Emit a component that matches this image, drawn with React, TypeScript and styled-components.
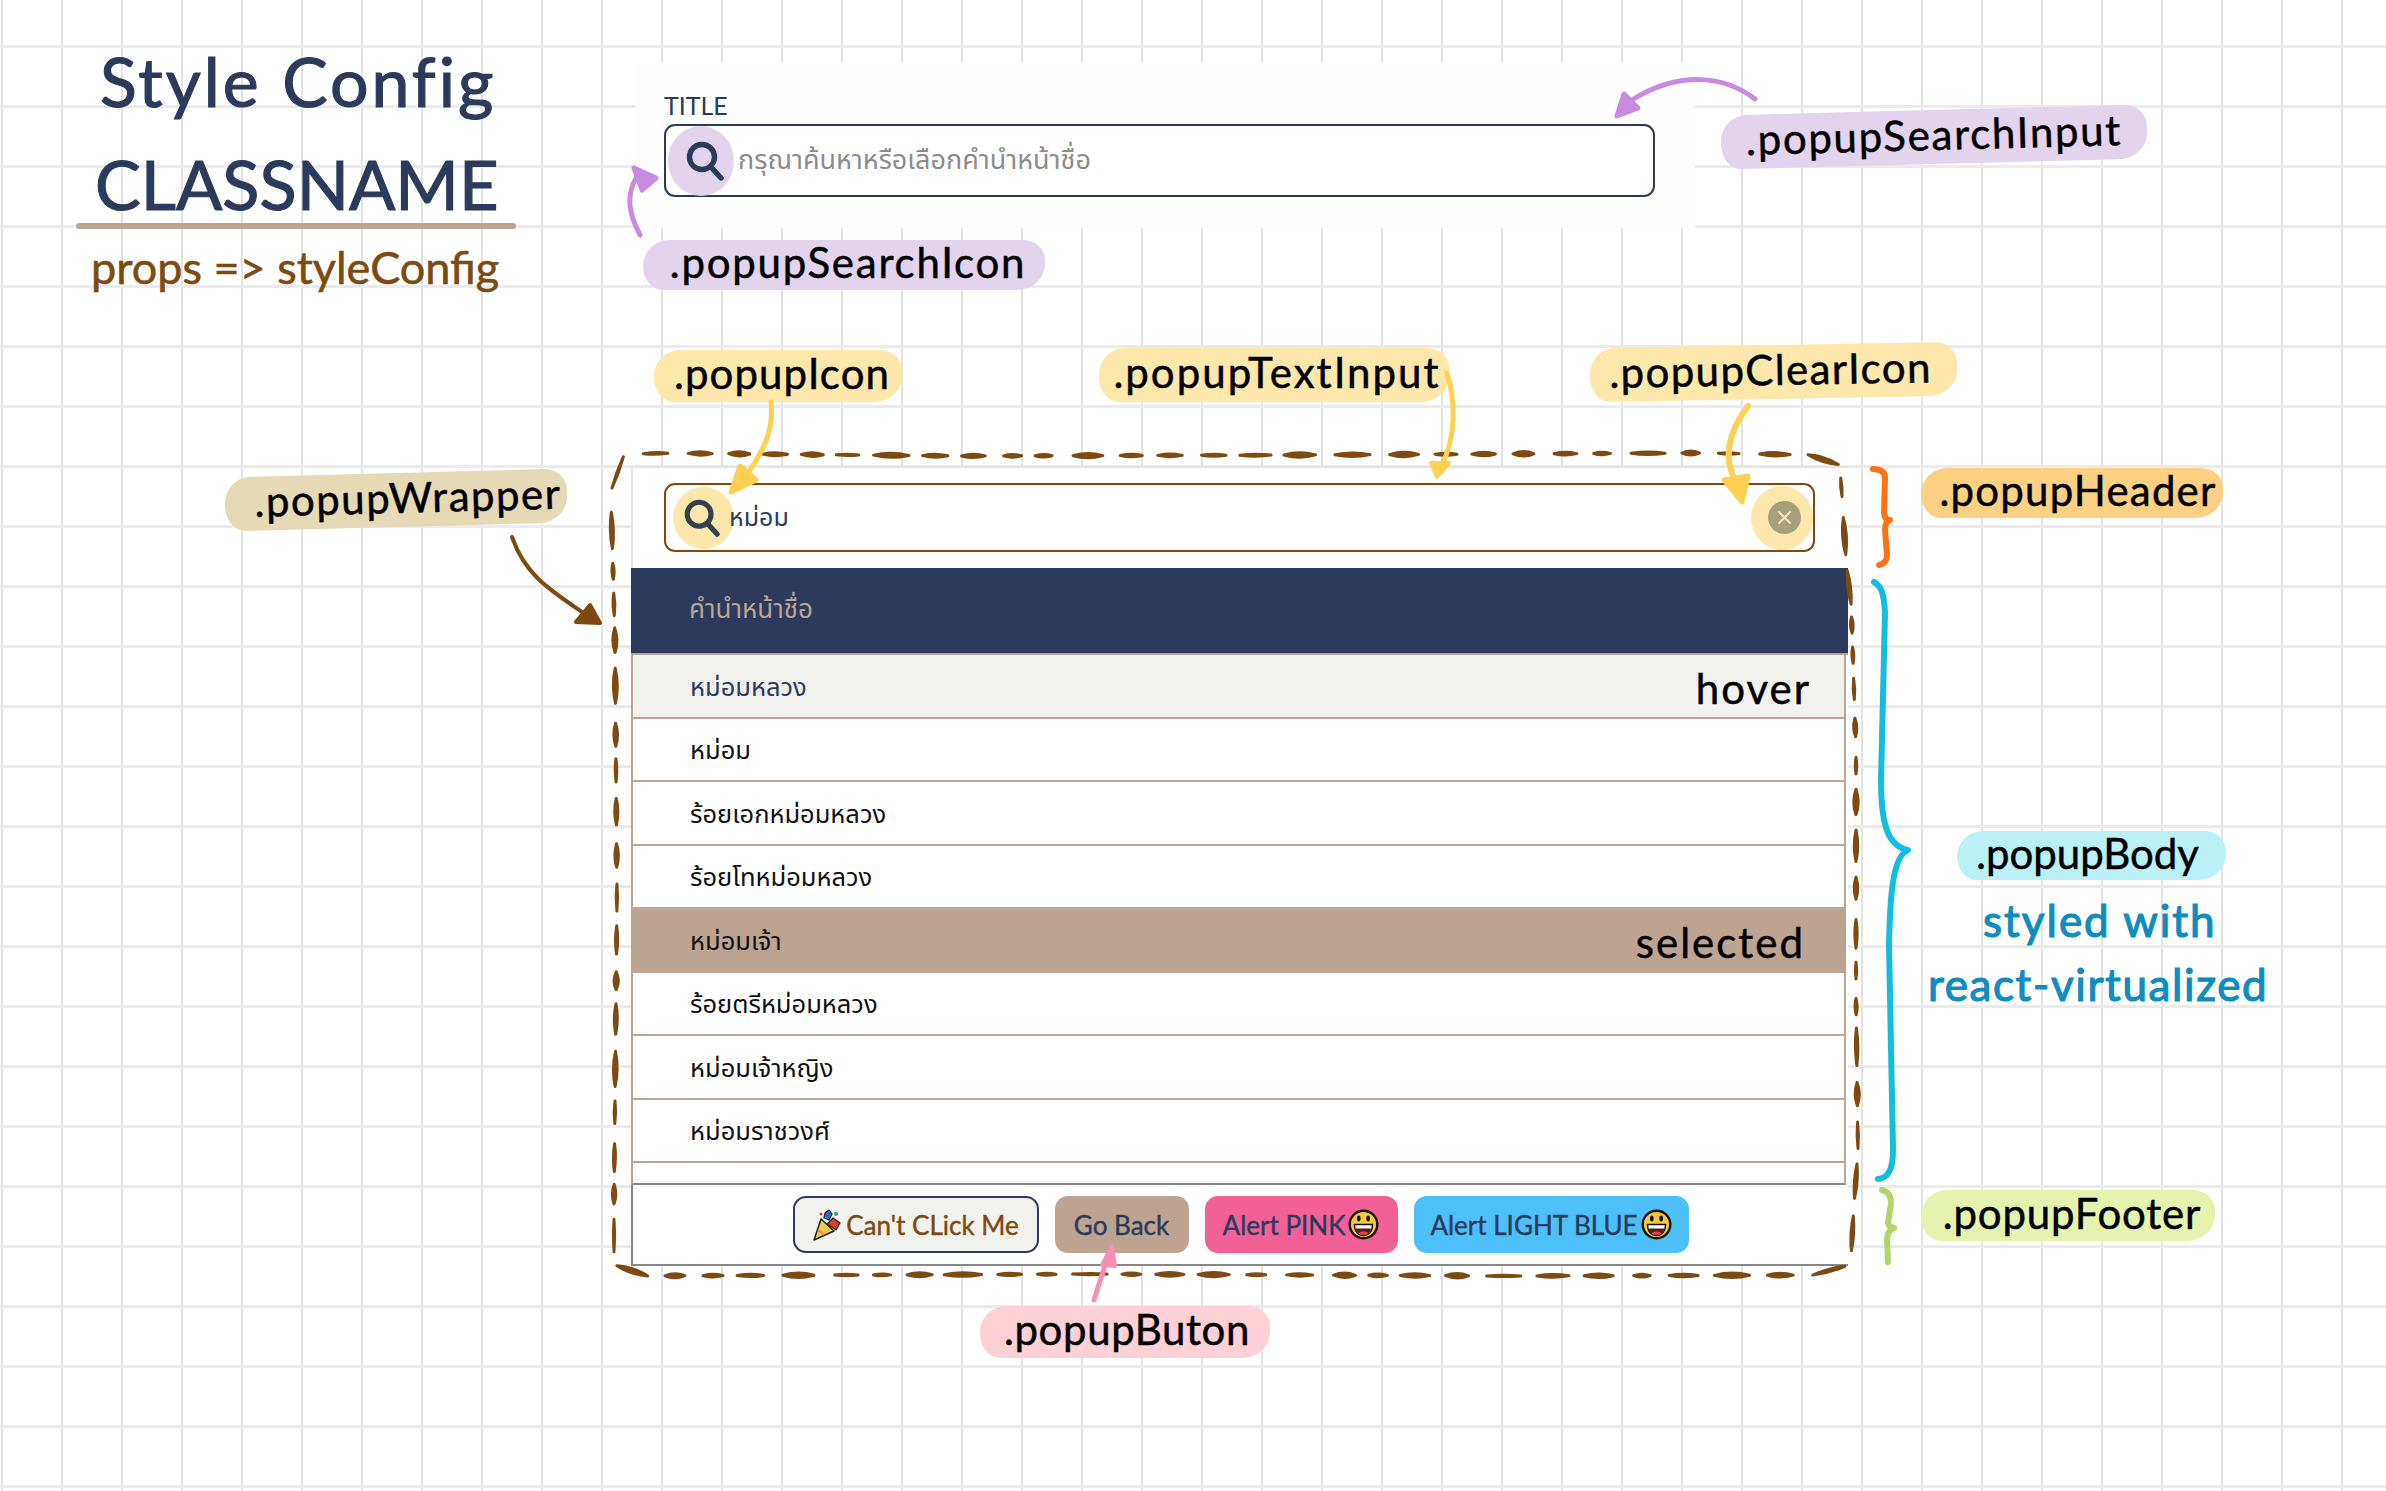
import React from "react";
import styled, { createGlobalStyle } from "styled-components";

const NAVY = "#2c3b5b";
const TAN = "#bca392";
const BROWN = "#7d4a12";
const HAND = `Lato, "Noto Sans", sans-serif`;
const THAI = `"Noto Sans Thai", "Noto Sans Thai Looped", "Noto Sans", Lato, sans-serif`;

const Global = createGlobalStyle`
  html, body { margin: 0; padding: 0; background: #fff; }
`;

const Canvas = styled.div`
  position: relative;
  width: 2386px;
  height: 1491px;
  overflow: hidden;
  background-color: #fff;
  background-image:
    linear-gradient(#ebebeb 3px, transparent 3px),
    linear-gradient(90deg, #e3e3e3 2px, transparent 2px);
  background-size: 60px 60px;
  background-position: 1px 45px;
`;

const Heading = styled.div<{ $x: number; $y: number; $size: number; $color: string; $ls?: number; $stroke?: number }>`
  position: absolute;
  left: ${(p) => p.$x}px;
  top: ${(p) => p.$y}px;
  font-family: ${HAND};
  font-size: ${(p) => p.$size}px;
  line-height: 1;
  color: ${(p) => p.$color};
  letter-spacing: ${(p) => p.$ls ?? 0}px;
  -webkit-text-stroke: ${(p) => p.$stroke ?? 1.2}px ${(p) => p.$color};
  white-space: nowrap;
`;

const Rule = styled.div`
  position: absolute;
  left: 76px;
  top: 223px;
  width: 440px;
  height: 6px;
  border-radius: 3px;
  background: ${TAN};
`;

const Note = styled.div<{
  $x: number; $y: number; $w: number; $h: number; $bg: string; $rot?: number; $ls?: number; $dx?: number;
}>`
  position: absolute;
  left: ${(p) => p.$x}px;
  top: ${(p) => p.$y}px;
  width: ${(p) => p.$w}px;
  height: ${(p) => p.$h}px;
  box-sizing: border-box;
  padding: 0 ${(p) => Math.max(0, -(p.$dx ?? 0) * 2)}px 6px ${(p) => Math.max(0, (p.$dx ?? 0) * 2)}px;
  display: flex;
  align-items: center;
  justify-content: center;
  background: ${(p) => p.$bg};
  border-radius: 26px 22px 28px 20px / 26px 20px 26px 24px;
  transform: rotate(${(p) => p.$rot ?? 0}deg);
  font-family: ${HAND};
  font-size: 42px;
  letter-spacing: ${(p) => p.$ls ?? 0}px;
  color: #000;
  -webkit-text-stroke: 0.5px #000;
  white-space: nowrap;
`;

const SearchPanel = styled.section`
  position: absolute;
  left: 635px;
  top: 63px;
  width: 1060px;
  height: 165px;
  box-sizing: border-box;
  padding: 30px 40px 0 29px;
  background: #fefefe;
  display: flex;
  flex-direction: column;
  gap: 7px;
`;

const FieldTitle = styled.div`
  font-family: Lato, sans-serif;
  font-size: 25px;
  line-height: 24px;
  color: ${NAVY};
`;

const Field = styled.div<{ $border: string; $h: number }>`
  position: relative;
  display: flex;
  align-items: center;
  box-sizing: border-box;
  height: ${(p) => p.$h}px;
  border: 2px solid ${(p) => p.$border};
  border-radius: 11px;
  background: #fff;
`;

const Bubble = styled.span<{ $bg: string; $w: number; $h: number; $ml: number; $shift?: number }>`
  flex: none;
  box-sizing: border-box;
  display: flex;
  align-items: center;
  justify-content: center;
  width: ${(p) => p.$w}px;
  height: ${(p) => p.$h}px;
  margin-left: ${(p) => p.$ml}px;
  padding: 0 ${(p) => Math.max(0, -(p.$shift ?? 0) * 2)}px 0 ${(p) => Math.max(0, (p.$shift ?? 0) * 2)}px;
  border-radius: 50%;
  background: ${(p) => p.$bg};
`;

const FieldText = styled.span<{ $color: string; $size: number; $ml: number }>`
  flex: 1;
  margin-left: ${(p) => p.$ml}px;
  font-family: ${THAI};
  font-size: ${(p) => p.$size}px;
  color: ${(p) => p.$color};
`;

const Clear = styled.span`
  display: flex;
  align-items: center;
  justify-content: center;
  width: 33px;
  height: 33px;
  margin-left: 4px;
  border-radius: 50%;
  background: #a6a17a;
`;

const Popup = styled.section`
  position: absolute;
  left: 631px;
  top: 466px;
  width: 1217px;
  height: 800px;
  display: flex;
  flex-direction: column;
  background: #fff;
`;

const Header = styled.header`
  flex: none;
  height: 102px;
  box-sizing: border-box;
  padding: 15px 33px 15px 31px;
  border-top: 2px solid #e6e6e6;
  border-left: 2px solid #e6e6e6;
  display: flex;
  flex-direction: column;
`;

const Body = styled.div`
  flex: none;
  height: 617px;
  box-sizing: border-box;
  display: flex;
  flex-direction: column;
  overflow: hidden;
`;

const ColumnTitle = styled.div`
  flex: none;
  height: 87px;
  box-sizing: border-box;
  padding: 0 0 1px 58px;
  display: flex;
  align-items: center;
  background: ${NAVY};
  border-bottom: 2px solid ${TAN};
  color: ${TAN};
  font-family: ${THAI};
  font-size: 26px;
`;

const List = styled.div`
  flex: 1;
  min-height: 0;
  margin-right: 2px;
  border-left: 2px solid ${TAN};
  border-right: 2px solid ${TAN};
  border-bottom: 2px solid #888;
  overflow: hidden;
`;

const Row = styled.div<{ $state?: "hover" | "selected" }>`
  height: 63.5px;
  box-sizing: border-box;
  padding: 4px 36px 0 57px;
  display: flex;
  align-items: center;
  justify-content: space-between;
  font-family: ${THAI};
  font-size: 25.5px;
  color: ${(p) => (p.$state === "hover" ? NAVY : "#111")};
  background: ${(p) => (p.$state === "hover" ? "#f1f1ed" : p.$state === "selected" ? TAN : "#fff")};
  border-bottom: 2px solid ${TAN};
`;

const RowNote = styled.span<{ $mr: number }>`
  margin-right: ${(p) => p.$mr}px;
  font-family: ${HAND};
  font-size: 42px;
  letter-spacing: 2px;
  color: #000;
  -webkit-text-stroke: 0.5px #000;
`;

const Footer = styled.footer`
  flex: none;
  height: 81px;
  box-sizing: border-box;
  padding-top: 11px;
  display: flex;
  justify-content: center;
  align-items: flex-start;
  gap: 16px;
  border-left: 2px solid #888;
  border-bottom: 2px solid #888;
`;

const Btn = styled.button<{ $w: number; $bg: string; $fg: string; $border?: string }>`
  width: ${(p) => p.$w}px;
  height: 57px;
  box-sizing: border-box;
  padding: 0;
  display: flex;
  align-items: center;
  justify-content: center;
  gap: 3px;
  border: ${(p) => (p.$border ? `2px solid ${p.$border}` : "none")};
  border-radius: 13px;
  background: ${(p) => p.$bg};
  color: ${(p) => p.$fg};
  font-family: ${HAND};
  font-size: 26px;
  -webkit-text-stroke: 0.4px ${(p) => p.$fg};
  white-space: nowrap;
`;

const Overlay = styled.svg`
  position: absolute;
  left: 0;
  top: 0;
  pointer-events: none;
`;

const SearchGlyph = ({ color, size = 42 }: { color: string; size?: number }) => (
  <svg width={size} height={size} viewBox="0 0 42 42" fill="none" stroke={color} strokeWidth="5.4" strokeLinecap="round">
    <circle cx="18" cy="17" r="12.5" />
    <path d="M27 27 L37 38" />
  </svg>
);

const ClearGlyph = () => (
  <svg width="15" height="15" viewBox="0 0 15 15" fill="none" stroke="#f4ebc0" strokeWidth="1.8" strokeLinecap="round">
    <path d="M2 2 L13 13 M13 2 L2 13" />
  </svg>
);

const Smiley = () => (
  <svg width="31" height="31" viewBox="0 0 31 31">
    <circle cx="15.5" cy="15.5" r="13.8" fill="#f6c63f" stroke="#111" strokeWidth="2.4" />
    <ellipse cx="10.8" cy="9.5" rx="1.8" ry="3" fill="#111" />
    <ellipse cx="20.2" cy="9.5" rx="1.8" ry="3" fill="#111" />
    <path d="M6.5 15.5 H24.5 C24.5 22.5 21 26.5 15.5 26.5 C10 26.5 6.5 22.5 6.5 15.5 Z" fill="#fff" stroke="#111" strokeWidth="1.4" />
    <path d="M7.6 19.5 H23.4 C22.4 23.8 19.6 25.8 15.5 25.8 C11.4 25.8 8.6 23.8 7.6 19.5 Z" fill="#5a1a1a" />
    <path d="M10.5 24.4 C12 21.8 19 21.8 20.5 24.4 C18.4 26.2 12.6 26.2 10.5 24.4 Z" fill="#e3423e" />
  </svg>
);

const Popper = () => (
  <svg width="31" height="32" viewBox="0 0 31 32">
    <path d="M9 10 L22 22 L2 31 Z" fill="#f6c94b" stroke="#222" strokeWidth="1.5" strokeLinejoin="round" />
    <path d="M6 21 L12 26" stroke="#e58a1f" strokeWidth="2" />
    <path d="M15 15 L21 9 L28 14 L24 21 Z" fill="#d8402c" stroke="#222" strokeWidth="1.2" />
    <path d="M13 4 L17 1 L20 5 L17 11 L12 9 Z" fill="#2b6fd0" stroke="#222" strokeWidth="1.2" />
    <circle cx="24" cy="5" r="2" fill="#3aa655" />
    <circle cx="9" cy="5" r="1.5" fill="#d8402c" />
  </svg>
);

type P = [number, number];

function buildDashes(points: P[], seed: number): string[] {
  let s = seed;
  const rnd = () => {
    s = (s * 9301 + 49297) % 233280;
    return s / 233280;
  };
  const out: string[] = [];
  const at = (d: number): P => {
    let left = d;
    for (let i = 0; i < points.length - 1; i++) {
      const [ax, ay] = points[i];
      const [bx, by] = points[i + 1];
      const l = Math.hypot(bx - ax, by - ay);
      if (left <= l) return [ax + ((bx - ax) * left) / l, ay + ((by - ay) * left) / l];
      left -= l;
    }
    return points[points.length - 1];
  };
  let total = 0;
  for (let i = 0; i < points.length - 1; i++) {
    total += Math.hypot(points[i + 1][0] - points[i][0], points[i + 1][1] - points[i][1]);
  }
  let d = 0;
  while (d < total) {
    const len = 16 + rnd() * 22;
    const gap = 12 + rnd() * 9;
    const a = at(d);
    const b = at(Math.min(d + len, total));
    const w = 1.2 + rnd() * 3.4;
    const mx = (a[0] + b[0]) / 2;
    const my = (a[1] + b[1]) / 2;
    const l = Math.hypot(b[0] - a[0], b[1] - a[1]) || 1;
    const nx = (-(b[1] - a[1]) / l) * w;
    const ny = ((b[0] - a[0]) / l) * w;
    out.push(
      `M${a[0].toFixed(1)} ${a[1].toFixed(1)}Q${(mx + nx).toFixed(1)} ${(my + ny).toFixed(1)} ${b[0].toFixed(1)} ${b[1].toFixed(1)}Q${(mx - nx).toFixed(1)} ${(my - ny).toFixed(1)} ${a[0].toFixed(1)} ${a[1].toFixed(1)}Z`
    );
    d += len + gap;
  }
  return out;
}

const frame: P[] = [
  [612, 488], [612, 470], [624, 456], [650, 453], [965, 456], [1300, 455], [1700, 453], [1822, 455], [1838, 462],
  [1841, 480], [1846, 560], [1851, 600], [1856, 750], [1856, 1000], [1858, 1150], [1853, 1220], [1851, 1258], [1838, 1275],
  [1500, 1276], [1100, 1274], [625, 1276],
  [614, 1262], [614, 1200], [617, 900], [615, 640], [611, 500],
];

const Frame = () => (
  <g fill={BROWN} stroke={BROWN} strokeWidth="3" strokeLinejoin="round">
    {buildDashes(frame, 17).map((d, i) => (
      <path key={i} d={d} />
    ))}
  </g>
);

const Marks = () => (
  <Overlay width="2386" height="1491" viewBox="0 0 2386 1491" fill="none" strokeLinecap="round" strokeLinejoin="round">
    <Frame />
    {/* purple arrows */}
    <path d="M1755 99 C1725 76 1680 70 1632 100" stroke="#c88be0" strokeWidth="5" />
    <path d="M1617 116 L1624 94 L1638 108 Z" fill="#c88be0" stroke="#c88be0" strokeWidth="5" />
    <path d="M640 235 C628 212 626 195 637 176" stroke="#c88be0" strokeWidth="5" />
    <path d="M634 168 L656 178 L642 190 Z" fill="#c88be0" stroke="#c88be0" strokeWidth="5" />
    {/* yellow arrows */}
    <path d="M771 402 C774 430 764 450 746 476" stroke="#ffd052" strokeWidth="5" />
    <path d="M731 492 L740 466 L756 480 Z" fill="#ffd052" stroke="#ffd052" strokeWidth="5" />
    <path d="M1447 373 C1456 400 1456 440 1441 466" stroke="#ffd052" strokeWidth="5" />
    <path d="M1437 477 L1431 463 L1449 463 Z" fill="#ffd052" stroke="#ffd052" strokeWidth="4" />
    <path d="M1748 406 C1730 430 1722 455 1735 480" stroke="#ffd052" strokeWidth="6" />
    <path d="M1742 502 L1724 480 L1748 476 Z" fill="#ffd052" stroke="#ffd052" strokeWidth="5" />
    {/* brown arrow */}
    <path d="M512 537 C525 575 550 590 585 614" stroke={BROWN} strokeWidth="4" />
    <path d="M600 623 L576 622 L590 605 Z" fill={BROWN} stroke={BROWN} strokeWidth="4" />
    {/* pink arrow */}
    <path d="M1094 1300 L1106 1262" stroke="#f88fb4" strokeWidth="5" />
    <path d="M1112 1246 L1102 1265 L1115 1266 Z" fill="#f88fb4" stroke="#f88fb4" strokeWidth="4" />
    {/* braces */}
    <path d="M1873 469 C1880 469 1885 471 1885 478 L1884 512 C1884 517 1886 520 1890 520 C1886 521 1885 525 1885 530 L1887 555 C1887 561 1884 564 1879 565" stroke="#fb7314" strokeWidth="6" />
    <path d="M1874 582 C1882 586 1884 596 1885 612 L1881 780 C1881 825 1888 846 1908 850 C1892 856 1890 900 1889 945 L1893 1150 C1893 1170 1888 1178 1878 1179" stroke="#12bde0" strokeWidth="6" />
    <path d="M1882 1190 C1889 1192 1891 1196 1891 1204 L1888 1222 C1888 1225 1890 1227 1894 1228 C1889 1230 1887 1234 1887 1240 L1888 1262" stroke="#b4d46c" strokeWidth="6" />
  </Overlay>
);

const rows: { label: string; state?: "hover" | "selected"; note?: string; mr?: number }[] = [
  { label: "หม่อมหลวง", state: "hover", note: "hover", mr: -3 },
  { label: "หม่อม" },
  { label: "ร้อยเอกหม่อมหลวง" },
  { label: "ร้อยโทหม่อมหลวง" },
  { label: "หม่อมเจ้า", state: "selected", note: "selected", mr: 3 },
  { label: "ร้อยตรีหม่อมหลวง" },
  { label: "หม่อมเจ้าหญิง" },
  { label: "หม่อมราชวงศ์" },
  { label: "" },
];

export default function App() {
  return (
    <Canvas>
      <Global />
      <Heading $x={100} $y={47} $size={68} $color={NAVY} $ls={3}>Style Config</Heading>
      <Heading $x={95} $y={150} $size={68.5} $color={NAVY}>CLASSNAME</Heading>
      <Rule />
      <Heading $x={91} $y={245} $size={45} $color={BROWN} $stroke={0.6}>props =&gt; styleConfig</Heading>

      <SearchPanel>
        <FieldTitle>TITLE</FieldTitle>
        <Field $border={NAVY} $h={73}>
          <Bubble $bg="#e2d4ec" $w={66} $h={70} $ml={2} $shift={4}>
            <SearchGlyph color={NAVY} />
          </Bubble>
          <FieldText $color="#8c8c8c" $size={27} $ml={4}>กรุณาค้นหาหรือเลือกคำนำหน้าชื่อ</FieldText>
        </Field>
      </SearchPanel>

      <Popup>
        <Header>
          <Field $border={BROWN} $h={69}>
            <Bubble $bg="#fee7ab" $w={61} $h={62} $ml={7} $shift={-2}>
              <SearchGlyph color="#33414f" size={40} />
            </Bubble>
            <FieldText $color={NAVY} $size={25} $ml={-5}>หม่อม</FieldText>
            <Bubble $bg="#fee7ab" $w={62} $h={64} $ml={0}>
              <Clear><ClearGlyph /></Clear>
            </Bubble>
          </Field>
        </Header>
        <Body>
          <ColumnTitle>คำนำหน้าชื่อ</ColumnTitle>
          <List>
            {rows.map((r, i) => (
              <Row key={i} $state={r.state}>
                <span>{r.label}</span>
                {r.note && <RowNote $mr={r.mr ?? 0}>{r.note}</RowNote>}
              </Row>
            ))}
          </List>
        </Body>
        <Footer>
          <Btn $w={246} $bg="#f1f1ed" $fg={BROWN} $border={NAVY}><Popper />Can't CLick Me</Btn>
          <Btn $w={134} $bg={TAN} $fg={NAVY}>Go Back</Btn>
          <Btn $w={193} $bg="#f36095" $fg={NAVY}>Alert PINK<Smiley /></Btn>
          <Btn $w={275} $bg="#4dc0f8" $fg={NAVY}>Alert LIGHT BLUE<Smiley /></Btn>
        </Footer>
      </Popup>

      <Note $x={1721} $y={110} $w={426} $h={54} $bg="#e2d4ec" $rot={-1.5} $ls={1.7}>.popupSearchInput</Note>
      <Note $x={643} $y={240} $w={402} $h={50} $bg="#e2d4ec" $ls={1.75} $dx={4}>.popupSearchIcon</Note>
      <Note $x={654} $y={350} $w={248} $h={52} $bg="#fee7ab" $ls={1.1} $dx={4}>.popupIcon</Note>
      <Note $x={1099} $y={348} $w={350} $h={54} $bg="#fee7ab" $ls={2} $dx={3}>.popupTextInput</Note>
      <Note $x={1590} $y={345} $w={367} $h={54} $bg="#fee7ab" $rot={-1} $ls={1.4} $dx={-3}>.popupClearIcon</Note>
      <Note $x={1921} $y={468} $w={302} $h={50} $bg="#fdd083" $ls={1.2} $dx={6}>.popupHeader</Note>
      <Note $x={225} $y={473} $w={342} $h={54} $bg="#e6d9b5" $rot={-1.5} $ls={1.5} $dx={12}>.popupWrapper</Note>
      <Note $x={1957} $y={831} $w={269} $h={49} $bg="#b9f1f7" $dx={-4}>.popupBody</Note>
      <Note $x={1921} $y={1190} $w={294} $h={51} $bg="#e6f3ae" $ls={0.8} $dx={4}>.popupFooter</Note>
      <Note $x={980} $y={1306} $w={290} $h={52} $bg="#ffd0d6" $ls={0.6} $dx={2}>.popupButon</Note>

      <Heading $x={1983} $y={898} $size={44} $color="#0f8cc0" $ls={2}>styled with</Heading>
      <Heading $x={1928} $y={962} $size={44} $color="#0f8cc0" $ls={1.6}>react-virtualized</Heading>

      <Marks />
    </Canvas>
  );
}
